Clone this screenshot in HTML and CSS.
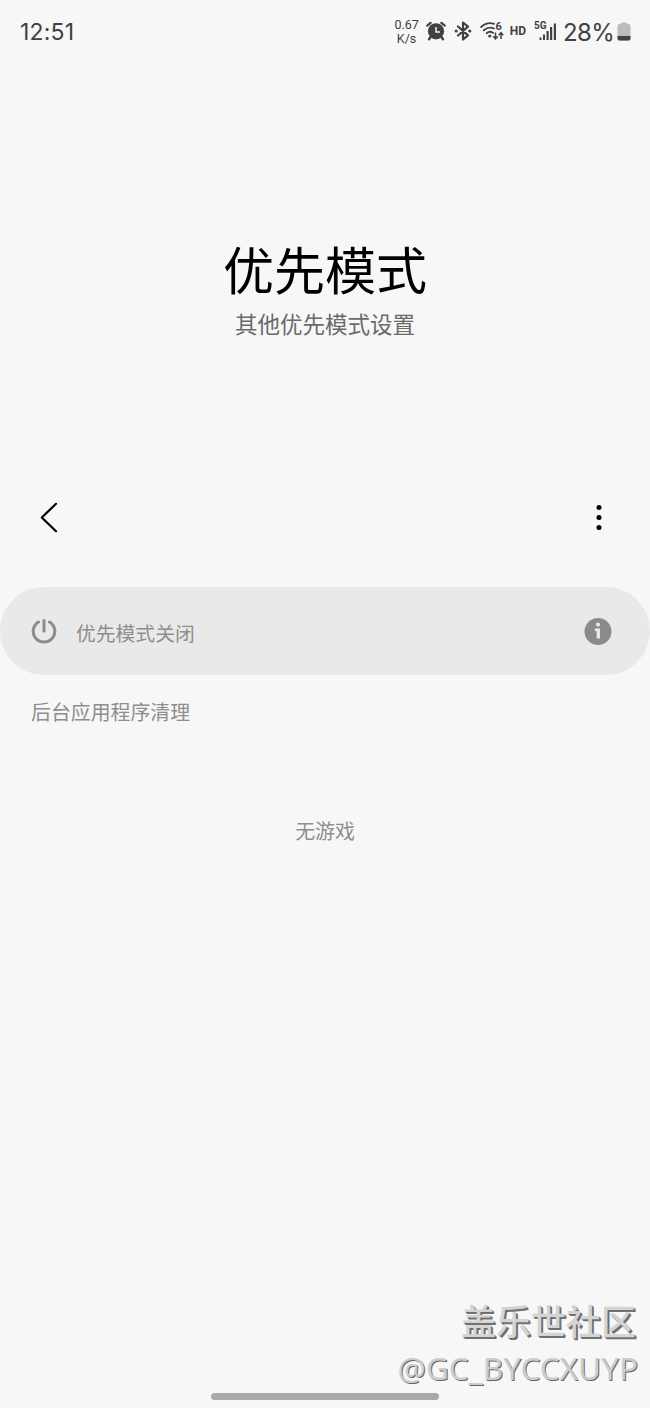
FILE: index.html
```html
<!DOCTYPE html>
<html lang="zh-CN">
<head>
  <meta charset="UTF-8">
  <meta name="viewport" content="width=device-width, initial-scale=1.0">
  <title>优先模式</title>
  <link rel="stylesheet" href="styles.css">
</head>
<body>
  <div class="status-bar">
    <span class="time">12:51</span>
    <div class="status-icons">
      <div class="speed"><span>0.67</span><span>K/s</span></div>
      <svg class="alarm" width="20" height="20" viewBox="0 0 20 20">
        <path d="M1.2 4.6L4.600 1.800M18.8 4.600L15.400 1.800" stroke="#414141" stroke-width="2.200" stroke-linecap="round"/>
        <path d="M4.500 16L3 18.200M15.500 16l1.500 2.200" stroke="#414141" stroke-width="2.400" stroke-linecap="round"/>
        <circle cx="10" cy="10.300" r="8.100" fill="#414141"/>
        <path d="M10 6v5h4" fill="none" stroke="#f7f7f7" stroke-width="1.500"/>
      </svg>
      <svg class="bluetooth" width="18" height="20" viewBox="0 0 18 20">
        <path d="M4 5.500l10 8.800-5 4.200v-17l5 4.200L4 14.500" fill="none" stroke="#414141" stroke-width="2.200" stroke-linejoin="round" stroke-linecap="round"/>
        <circle cx="2.200" cy="10" r="1.600" fill="#414141"/>
        <circle cx="15.800" cy="10" r="1.600" fill="#414141"/>
      </svg>
      <svg class="wifi" width="25" height="20" viewBox="0 0 25 20">
        <g fill="none" stroke="#414141" stroke-width="1.800" stroke-linecap="round">
          <path d="M1.200 6C5 2.300 10 1.400 14 2.800"/>
          <path d="M3.800 9.300C7 6.500 10.500 6 14 7.500"/>
          <path d="M6.600 12.200c2-1.700 4.500-1.700 6.500-.3"/>
        </g>
        <circle cx="9.800" cy="15" r="1.600" fill="#414141"/>
        <path d="M15.500 11.500v6M13.200 15.300l2.300 2.500 2.300-2.500M21 18v-6M18.700 14.200l2.300-2.500 2.300 2.500" fill="none" stroke="#414141" stroke-width="1.500"/>
        <text class="wifi-six" x="15.500" y="9">6</text>
      </svg>
      <span class="hd">HD</span>
      <svg class="signal" width="24" height="22" viewBox="0 0 24 22">
        <text class="five-g" x="0" y="8.500">5G</text>
        <path d="M5.500 17.500h2V20h-2zM9 14.500h2V20H9zM12.500 11h2.200v9h-2.200zM16 7h2.200v13H16zM19.800 3.500H22V20h-2.200z" fill="#414141"/>
      </svg>
      <span class="percent">28%</span>
      <svg class="battery" width="14" height="19" viewBox="0 0 14 19">
        <path d="M4 2V1.500Q4 .5 5 .5h4q1 0 1 1V2h1.500Q13.500 2 13.500 4v12.500q0 2-2 2h-9q-2 0-2-2V4q0-2 2-2z" fill="#bcbcbc"/>
        <path d="M.5 14h13v2.500q0 2-2 2h-9q-2 0-2-2z" fill="#414141"/>
      </svg>
    </div>
  </div>

  <div class="header">
    <h1>优先模式</h1>
    <p>其他优先模式设置</p>
  </div>

  <div class="toolbar">
    <svg width="20" height="32" viewBox="0 0 20 32">
      <path d="M17 2.800L2.800 16.500 17 30.200" fill="none" stroke="#000" stroke-width="2.200" stroke-linecap="round" stroke-linejoin="round"/>
    </svg>
    <svg width="6" height="26" viewBox="0 0 6 26">
      <circle cx="3" cy="3.500" r="2.500"/>
      <circle cx="3" cy="13.500" r="2.500"/>
      <circle cx="3" cy="23.500" r="2.500"/>
    </svg>
  </div>

  <div class="mode-card">
    <svg width="26" height="26" viewBox="0 0 26 26">
      <path d="M7.500 4a10.800 10.800 0 1 0 11 0" fill="none" stroke="#8c8c8c" stroke-width="3" stroke-linecap="round"/>
      <path d="M13 2.500V13" stroke="#8c8c8c" stroke-width="3" stroke-linecap="round"/>
    </svg>
    <span class="mode-label">优先模式关闭</span>
    <svg width="28" height="28" viewBox="0 0 28 28">
      <circle cx="14" cy="14.500" r="13.500" fill="#8a8a8a"/>
      <circle cx="14" cy="7.500" r="2" fill="#eaeaea"/>
      <path d="M10.800 11.500H16v10h-3.400v-7.400h-1.800z" fill="#eaeaea"/>
    </svg>
  </div>

  <div class="section-title">后台应用程序清理</div>
  <div class="empty">无游戏</div>

  <div class="footer">
    <div class="community">盖乐世社区</div>
    <div class="user">@GC_BYCCXUYP</div>
    <div class="home-bar"></div>
  </div>
</body>
</html>
```
FILE: styles.css
```css
* {
  box-sizing: border-box;
}
body {
  margin: 0;
  height: 1408px;
  display: flex;
  flex-direction: column;
  background: #f7f7f7;
  font-family: Roboto, "Noto Sans CJK SC", sans-serif;
  overflow: hidden;
}
svg {
  display: block;
  flex: none;
}
.status-bar {
  height: 62px;
  padding: 0 19px 0 20px;
  display: flex;
  align-items: center;
  justify-content: space-between;
  color: #414141;
}
.time {
  font-family: Inter, sans-serif;
  font-size: 23px;
  letter-spacing: 0.2px;
  padding-top: 2px;
}
.status-icons {
  display: flex;
  align-items: center;
}
.speed {
  display: flex;
  flex-direction: column;
  align-items: center;
  font-size: 12.5px;
  line-height: 14px;
  margin-right: 7px;
  padding-top: 1px;
}
.alarm {
  margin-right: 8px;
}
.bluetooth {
  margin-right: 8px;
}
.wifi {
  margin-right: 5px;
}
.wifi-six {
  font: bold 11px Roboto, sans-serif;
  fill: #414141;
}
.hd {
  font-size: 12px;
  font-weight: bold;
  margin-right: 8px;
}
.five-g {
  font: bold 10px Roboto, sans-serif;
  fill: #414141;
}
.signal {
  margin-right: 5px;
}
.percent {
  font-family: Inter, sans-serif;
  font-size: 24px;
  letter-spacing: -0.7px;
  margin-right: 3px;
  padding-top: 2px;
}
.header {
  height: 423px;
  padding-top: 178px;
  text-align: center;
}
.header h1 {
  margin: 0;
  font-size: 51px;
  line-height: 66px;
  font-weight: normal;
  color: #000;
}
.header p {
  margin: 3px 0 0;
  font-size: 22.5px;
  line-height: 32px;
  color: #6a6a6a;
}
.toolbar {
  height: 64px;
  padding: 0 48px 0 39px;
  display: flex;
  align-items: center;
  justify-content: space-between;
}
.mode-card {
  height: 88px;
  margin-top: 38px;
  padding: 0 38px 0 31px;
  display: flex;
  align-items: center;
  background: #e9e9e9;
  border-radius: 44px;
}
.mode-label {
  flex: 1;
  margin-left: 19px;
  padding-top: 7px;
  font-size: 19.8px;
  line-height: 28px;
  color: #8e8e8e;
}
.section-title {
  margin: 25px 0 0 31px;
  font-size: 19.9px;
  line-height: 28px;
  color: #8e8e8e;
}
.empty {
  margin-top: 91px;
  text-align: center;
  font-size: 19.9px;
  line-height: 28px;
  color: #8e8e8e;
}
.footer {
  margin-top: auto;
  display: flex;
  flex-direction: column;
  align-items: flex-end;
  padding-bottom: 8px;
}
.community {
  font-size: 35px;
  line-height: 46px;
  font-weight: 500;
  margin-right: 14px;
  color: #d4d4d4;
  text-shadow: 1px 1px 0 #707070, 2px 2px 0 #707070;
}
.user {
  font-family: "Noto Sans", sans-serif;
  font-size: 31.5px;
  line-height: 42px;
  margin: 0 12px 4px 0;
  color: #cdcdcd;
  text-shadow: 1px 1px 0 #666;
}
.home-bar {
  align-self: center;
  width: 228px;
  height: 7px;
  border-radius: 4px;
  background: #a9a9a9;
}
```
